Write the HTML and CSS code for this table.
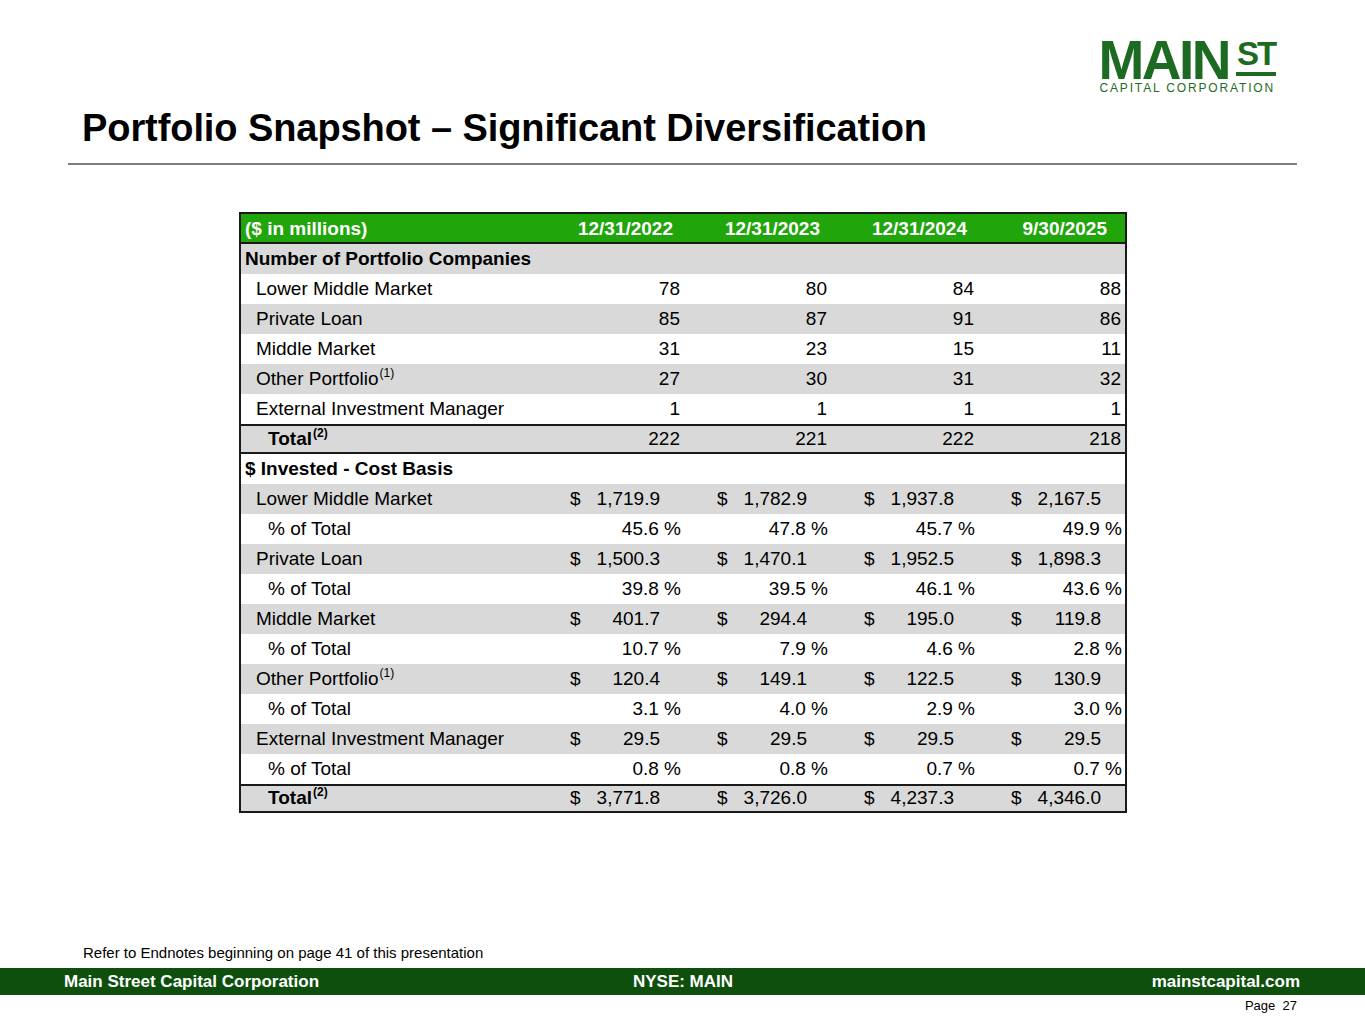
FILE: index.html
```html
<!DOCTYPE html>
<html lang="en">
<head>
<meta charset="utf-8">
<title>Portfolio Snapshot – Significant Diversification</title>
<link rel="stylesheet" href="styles.css">
</head>
<body>
<div class="page">
  <header class="top">
    <div class="logo">
      <div class="logo-main">
        <span class="logo-word">MAIN</span>
        <span class="logo-st">ST</span>
      </div>
      <div class="logo-sub">CAPITAL CORPORATION</div>
    </div>
  </header>
  <h1 class="title">Portfolio Snapshot – Significant Diversification</h1>
  <div class="rule"></div>

  <table class="snap">
    <colgroup>
      <col class="c-label"><col class="c-num"><col class="c-num"><col class="c-num"><col class="c-num">
    </colgroup>
    <thead>
      <tr class="hdr">
        <th class="lbl">($ in millions)</th>
        <th>12/31/2022</th>
        <th>12/31/2023</th>
        <th>12/31/2024</th>
        <th class="last">9/30/2025</th>
      </tr>
    </thead>
    <tbody>
      <tr class="gray"><td class="cat" colspan="5">Number of Portfolio Companies</td></tr>
      <tr><td class="sub">Lower Middle Market</td><td class="n">78</td><td class="n">80</td><td class="n">84</td><td class="n">88</td></tr>
      <tr class="gray"><td class="sub">Private Loan</td><td class="n">85</td><td class="n">87</td><td class="n">91</td><td class="n">86</td></tr>
      <tr><td class="sub">Middle Market</td><td class="n">31</td><td class="n">23</td><td class="n">15</td><td class="n">11</td></tr>
      <tr class="gray"><td class="sub">Other Portfolio<sup>(1)</sup></td><td class="n">27</td><td class="n">30</td><td class="n">31</td><td class="n">32</td></tr>
      <tr><td class="sub">External Investment Manager</td><td class="n">1</td><td class="n">1</td><td class="n">1</td><td class="n">1</td></tr>
      <tr class="gray total"><td class="tot">Total<sup>(2)</sup></td><td class="n">222</td><td class="n">221</td><td class="n">222</td><td class="n">218</td></tr>
      <tr><td class="cat" colspan="5">$ Invested - Cost Basis</td></tr>

      <tr class="gray"><td class="sub">Lower Middle Market</td>
        <td><div class="d"><span>$</span><span>1,719.9</span></div></td>
        <td><div class="d"><span>$</span><span>1,782.9</span></div></td>
        <td><div class="d"><span>$</span><span>1,937.8</span></div></td>
        <td><div class="d"><span>$</span><span>2,167.5</span></div></td></tr>
      <tr><td class="pct-l">% of Total</td><td class="p">45.6 %</td><td class="p">47.8 %</td><td class="p">45.7 %</td><td class="p">49.9 %</td></tr>

      <tr class="gray"><td class="sub">Private Loan</td>
        <td><div class="d"><span>$</span><span>1,500.3</span></div></td>
        <td><div class="d"><span>$</span><span>1,470.1</span></div></td>
        <td><div class="d"><span>$</span><span>1,952.5</span></div></td>
        <td><div class="d"><span>$</span><span>1,898.3</span></div></td></tr>
      <tr><td class="pct-l">% of Total</td><td class="p">39.8 %</td><td class="p">39.5 %</td><td class="p">46.1 %</td><td class="p">43.6 %</td></tr>

      <tr class="gray"><td class="sub">Middle Market</td>
        <td><div class="d"><span>$</span><span>401.7</span></div></td>
        <td><div class="d"><span>$</span><span>294.4</span></div></td>
        <td><div class="d"><span>$</span><span>195.0</span></div></td>
        <td><div class="d"><span>$</span><span>119.8</span></div></td></tr>
      <tr><td class="pct-l">% of Total</td><td class="p">10.7 %</td><td class="p">7.9 %</td><td class="p">4.6 %</td><td class="p">2.8 %</td></tr>

      <tr class="gray"><td class="sub">Other Portfolio<sup>(1)</sup></td>
        <td><div class="d"><span>$</span><span>120.4</span></div></td>
        <td><div class="d"><span>$</span><span>149.1</span></div></td>
        <td><div class="d"><span>$</span><span>122.5</span></div></td>
        <td><div class="d"><span>$</span><span>130.9</span></div></td></tr>
      <tr><td class="pct-l">% of Total</td><td class="p">3.1 %</td><td class="p">4.0 %</td><td class="p">2.9 %</td><td class="p">3.0 %</td></tr>

      <tr class="gray"><td class="sub">External Investment Manager</td>
        <td><div class="d"><span>$</span><span>29.5</span></div></td>
        <td><div class="d"><span>$</span><span>29.5</span></div></td>
        <td><div class="d"><span>$</span><span>29.5</span></div></td>
        <td><div class="d"><span>$</span><span>29.5</span></div></td></tr>
      <tr><td class="pct-l">% of Total</td><td class="p">0.8 %</td><td class="p">0.8 %</td><td class="p">0.7 %</td><td class="p">0.7 %</td></tr>

      <tr class="gray total-last"><td class="tot">Total<sup>(2)</sup></td>
        <td><div class="d"><span>$</span><span>3,771.8</span></div></td>
        <td><div class="d"><span>$</span><span>3,726.0</span></div></td>
        <td><div class="d"><span>$</span><span>4,237.3</span></div></td>
        <td><div class="d"><span>$</span><span>4,346.0</span></div></td></tr>
    </tbody>
  </table>

  <div class="spacer"></div>
  <p class="footnote">Refer to Endnotes beginning on page 41 of this presentation</p>
  <footer class="bar">
    <span class="bar-left">Main Street Capital Corporation</span>
    <span class="bar-mid">NYSE: MAIN</span>
    <span class="bar-right">mainstcapital.com</span>
  </footer>
  <div class="pageno">Page&nbsp; 27</div>
</div>
</body>
</html>
```

FILE: styles.css
```css
* { box-sizing: border-box; }
html, body { margin: 0; padding: 0; background: #fff; }
body {
  font-family: "Liberation Sans", Arial, sans-serif;
  color: #000;
}
.page {
  width: 1365px;
  height: 1024px;
  display: flex;
  flex-direction: column;
  overflow: hidden;
}

/* header / logo */
.top {
  display: flex;
  justify-content: flex-end;
  padding: 39px 89px 0 0;
  height: 100px;
}
.logo {
  display: flex;
  flex-direction: column;
  align-items: flex-start;
  color: #1d6b22;
}
.logo-main {
  display: flex;
  align-items: flex-start;
  height: 42px;
}
.logo-word {
  font-weight: bold;
  font-size: 55px;
  line-height: 42px;
  letter-spacing: -2.5px;
  margin-right: 7px;
}
.logo-st {
  font-weight: bold;
  font-size: 33px;
  line-height: 26px;
  margin-top: 2px;
  padding-bottom: 5px;
  border-bottom: 4px solid #1d6b22;
  letter-spacing: -2px;
  width: 40px;
  text-align: center;
}
.logo-sub {
  font-size: 12px;
  letter-spacing: 1.85px;
  line-height: 10px;
  margin-top: 2px;
  margin-left: 1px;
  white-space: nowrap;
}

.title {
  margin: 6px 0 0 82px;
  font-size: 38px;
  line-height: 44px;
  font-weight: bold;
  letter-spacing: -0.08px;
}
.rule {
  margin: 13px 0 0 68px;
  width: 1229px;
  height: 2px;
  background: #7f7f7f;
}

/* table */
.snap {
  margin: 47px 0 0 239px;
  width: 888px;
  border-collapse: separate;
  border-spacing: 0;
  table-layout: fixed;
  border: 2px solid #1a1a1a;
  font-size: 19px;
}
.c-label { width: 296px; }
.c-num { width: 147px; }
.snap th, .snap td {
  height: 30px;
  padding: 0;
  line-height: 30px;
  white-space: nowrap;
  vertical-align: middle;
}
.hdr { background: #20a50b; color: #fff; }
.hdr th {
  text-align: right;
  padding-right: 11px;
  font-weight: bold;
  box-shadow: inset 0 -2px 0 #1a1a1a;
}
.hdr th.lbl { text-align: left; padding-left: 4px; padding-right: 0; }
.hdr th.last { padding-right: 18px; }

.gray { background: #d9d9d9; }
.total td { box-shadow: inset 0 2px 0 #1a1a1a, inset 0 -2px 0 #1a1a1a; }
.total-last td { box-shadow: inset 0 2px 0 #1a1a1a; height: 27px; line-height: 27px; }

.cat { font-weight: bold; padding-left: 4px !important; }
.sub { padding-left: 15px !important; }
.pct-l { padding-left: 27px !important; }
.tot { padding-left: 27px !important; font-weight: bold; }

.n { text-align: right; padding-right: 4px !important; }
.p { text-align: right; padding-right: 3px !important; }
.d {
  display: flex;
  justify-content: space-between;
  padding: 0 24px 0 33px;
}

sup {
  font-size: 12px;
  line-height: 0;
  vertical-align: 8px;
  margin-left: 1px;
}

.spacer { flex: 1; }
.footnote {
  margin: 0 0 6px 83px;
  font-size: 15px;
  line-height: 18px;
}
.bar {
  height: 27px;
  background: #0e4f0e;
  color: #fff;
  font-weight: bold;
  font-size: 17px;
  display: flex;
  align-items: center;
  justify-content: space-between;
  padding: 0 65px 0 64px;
}
.bar-left, .bar-right { flex: 1; }
.bar-right { text-align: right; }
.bar-mid { flex: none; margin-left: 2px; }
.pageno {
  text-align: right;
  padding-right: 68px;
  font-size: 13px;
  line-height: 16px;
  height: 29px;
  padding-top: 3px;
}
```
